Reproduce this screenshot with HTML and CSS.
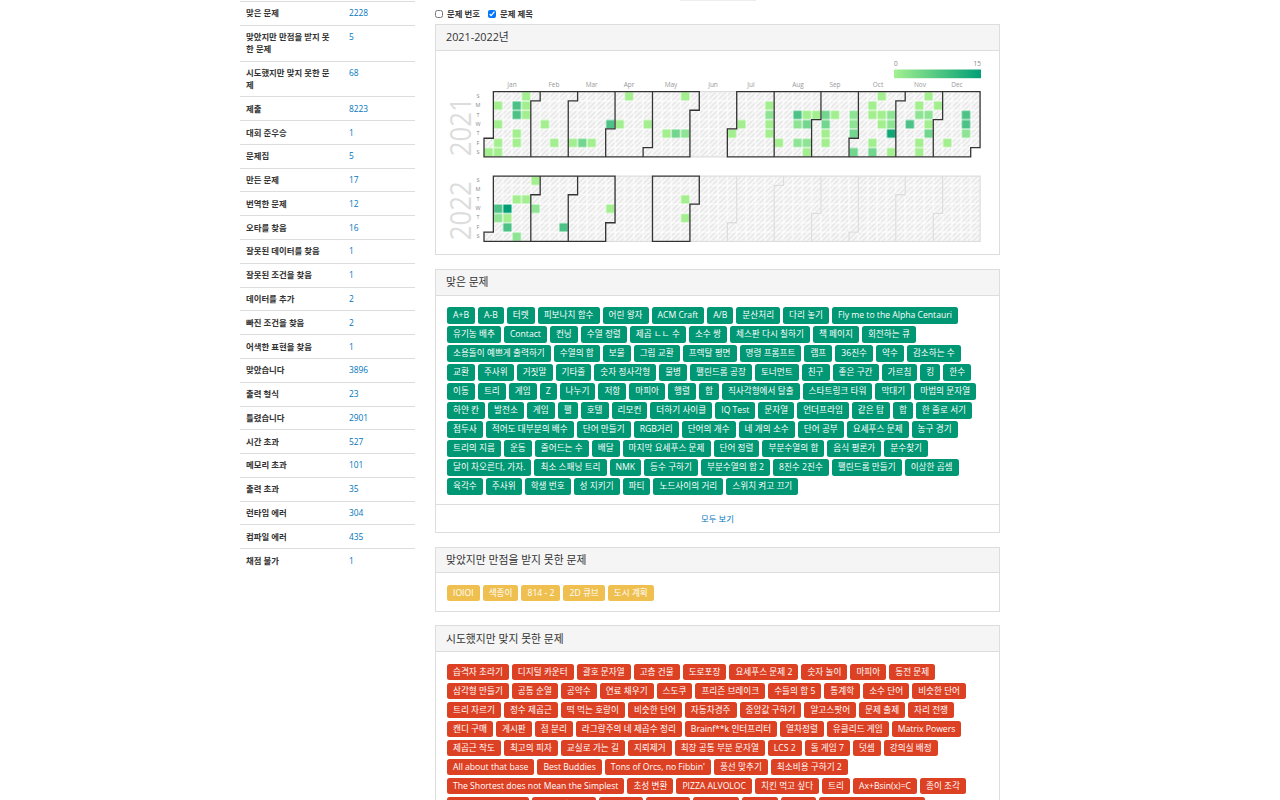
FILE: index.html
```html
<!DOCTYPE html>
<html lang="ko">
<head>
<meta charset="utf-8">
<title>백준 프로필</title>
<link rel="stylesheet" href="styles.css">
</head>
<body>
<div class="page">
<aside class="side">
<table class="stats">
<tr><th>맞은 문제</th><td><a>2228</a></td></tr>
<tr><th>맞았지만 만점을 받지 못한 문제</th><td><a>5</a></td></tr>
<tr><th>시도했지만 맞지 못한 문제</th><td><a>68</a></td></tr>
<tr><th>제출</th><td><a>8223</a></td></tr>
<tr><th>대회 준우승</th><td><a>1</a></td></tr>
<tr><th>문제집</th><td><a>5</a></td></tr>
<tr><th>만든 문제</th><td><a>17</a></td></tr>
<tr><th>번역한 문제</th><td><a>12</a></td></tr>
<tr><th>오타를 찾음</th><td><a>16</a></td></tr>
<tr><th>잘못된 데이터를 찾음</th><td><a>1</a></td></tr>
<tr><th>잘못된 조건을 찾음</th><td><a>1</a></td></tr>
<tr><th>데이터를 추가</th><td><a>2</a></td></tr>
<tr><th>빠진 조건을 찾음</th><td><a>2</a></td></tr>
<tr><th>어색한 표현을 찾음</th><td><a>1</a></td></tr>
<tr><th>맞았습니다</th><td><a>3896</a></td></tr>
<tr><th>출력 형식</th><td><a>23</a></td></tr>
<tr><th>틀렸습니다</th><td><a>2901</a></td></tr>
<tr><th>시간 초과</th><td><a>527</a></td></tr>
<tr><th>메모리 초과</th><td><a>101</a></td></tr>
<tr><th>출력 초과</th><td><a>35</a></td></tr>
<tr><th>런타임 에러</th><td><a>304</a></td></tr>
<tr><th>컴파일 에러</th><td><a>435</a></td></tr>
<tr><th>채점 불가</th><td><a>1</a></td></tr>
</table>
</aside>
<main class="main">
<div class="sliver"></div>
<div class="checks">
<label class="check"><input type="checkbox">문제 번호</label>
<label class="check"><input type="checkbox" checked>문제 제목</label>
</div>

<section class="panel">
<h3 class="panel-head">2021-2022년</h3>
<svg class="heat" viewBox="436 50.8 563 203.4" width="563" height="203.4">
<defs>
<pattern id="hatch" width="0.38" height="0.38" patternUnits="userSpaceOnUse" patternTransform="rotate(45)">
<rect class="hatch-bg" width="0.38" height="0.38"></rect>
<rect class="hatch-line" width="0.14" height="0.38"></rect>
</pattern>
<pattern id="grid" width="1" height="1" patternUnits="userSpaceOnUse">
<rect class="grid-cell" width="1" height="1"></rect>
</pattern>
<linearGradient id="legend">
<stop class="stop-a" offset="0"></stop>
<stop class="stop-b" offset="1"></stop>
</linearGradient>
</defs>
<rect class="legend-bar" x="894" y="69.3" width="87" height="8.7"></rect>
<text class="lbl" x="894" y="66">0</text>
<text class="lbl end" x="981" y="66">15</text>
<g class="months">
<text x="512" y="87">Jan</text><text x="554" y="87">Feb</text><text x="591.7" y="87">Mar</text><text x="629" y="87">Apr</text><text x="671" y="87">May</text><text x="713" y="87">Jun</text><text x="751" y="87">Jul</text><text x="798" y="87">Aug</text><text x="835" y="87">Sep</text><text x="878" y="87">Oct</text><text x="920" y="87">Nov</text><text x="957" y="87">Dec</text>
</g>
<text class="year" transform="translate(471,156) rotate(-90)" textLength="59" lengthAdjust="spacingAndGlyphs">2021</text>
<text class="year" transform="translate(471,240) rotate(-90)" textLength="59" lengthAdjust="spacingAndGlyphs">2022</text>
<g class="days">
<text x="478" y="98">S</text><text x="478" y="107.3">M</text><text x="478" y="116.7">T</text><text x="478" y="126">W</text><text x="478" y="135.3">T</text><text x="478" y="144.6">F</text><text x="478" y="154">S</text>
</g>
<g class="days">
<text x="478" y="182">S</text><text x="478" y="191.3">M</text><text x="478" y="200.7">T</text><text x="478" y="210">W</text><text x="478" y="219.3">T</text><text x="478" y="228.6">F</text><text x="478" y="238">S</text>
</g>
<g transform="translate(484,91.4) scale(9.36,9.33)">
<path class="bg" d="M0 5H1V0H53V6H52V7H0Z"></path>
<path class="c1" d="M4 0h1v1h-1zM15 0h1v1h-1zM21 0h1v1h-1zM42 0h1v1h-1zM47 0h1v1h-1zM1 1h1v1h-1zM4 1h1v1h-1zM30 1h1v1h-1zM41 1h1v1h-1zM46 1h1v1h-1zM48 1h1v1h-1zM4 2h1v1h-1zM34 2h1v1h-1zM35 2h1v1h-1zM37 2h1v1h-1zM41 2h1v1h-1zM42 2h1v1h-1zM1 3h1v1h-1zM6 3h1v1h-1zM14 3h1v1h-1zM17 3h1v1h-1zM27 3h1v1h-1zM30 3h1v1h-1zM42 3h1v1h-1zM47 3h1v1h-1zM3 4h1v1h-1zM19 4h1v1h-1zM26 4h1v1h-1zM30 4h1v1h-1zM36 4h1v1h-1zM1 5h1v1h-1zM3 5h1v1h-1zM7 5h1v1h-1zM9 5h1v1h-1zM11 5h1v1h-1zM31 5h1v1h-1zM36 5h1v1h-1zM41 5h1v1h-1zM46 5h1v1h-1zM49 5h1v1h-1zM0 6h1v1h-1zM1 6h1v1h-1zM34 6h1v1h-1zM43 6h1v1h-1zM46 6h1v1h-1z"></path>
<path class="c2" d="M30 2h1v1h-1zM39 2h1v1h-1zM43 2h1v1h-1zM46 2h1v1h-1zM47 2h1v1h-1zM33 3h1v1h-1zM39 3h1v1h-1zM43 3h1v1h-1zM21 4h1v1h-1zM51 4h1v1h-1zM33 5h1v1h-1zM34 5h1v1h-1z"></path>
<path class="c3" d="M36 2h1v1h-1zM34 3h1v1h-1zM36 3h1v1h-1zM20 4h1v1h-1zM39 4h1v1h-1zM47 4h1v1h-1zM10 5h1v1h-1zM39 6h1v1h-1zM41 6h1v1h-1z"></path>
<path class="c4" d="M3 1h1v1h-1zM3 2h1v1h-1zM33 2h1v1h-1zM51 2h1v1h-1zM13 3h1v1h-1zM45 3h1v1h-1zM51 3h1v1h-1z"></path>
<path class="c5" d="M43 4h1v1h-1z"></path>
<path class="gridlines" d="M0 5H1V0H53V6H52V7H0Z"></path>
<path class="off" d="M22 2H23V0H27V4H26V7H22Z"></path>
<path class="on" d="M0 5H1V0H6V1H5V7H0ZM5 1H6V0H10V1H9V7H5ZM9 1H10V0H14V4H13V7H9ZM13 4H14V0H18V6H17V7H13ZM17 6H18V0H23V2H22V7H17ZM26 4H27V0H31V7H26ZM31 0H36V3H35V7H31ZM35 3H36V0H40V5H39V7H35ZM39 5H40V0H45V1H44V7H39ZM44 1H45V0H49V3H48V7H44ZM48 3H49V0H53V6H52V7H48Z"></path>
</g>
<g transform="translate(484,175.9) scale(9.36,9.33)">
<path class="bg" d="M0 6H1V0H53V7H0Z"></path>
<path class="c1" d="M5 0h1v1h-1zM3 2h1v1h-1zM4 2h1v1h-1zM21 2h1v1h-1zM13 3h1v1h-1zM2 4h1v1h-1zM21 4h1v1h-1z"></path>
<path class="c2" d="M5 3h1v1h-1zM3 6h1v1h-1zM1 4h1v1h-1z"></path>
<path class="c4" d="M1 3h1v1h-1zM2 5h1v1h-1zM8 5h1v1h-1z"></path>
<path class="c6" d="M2 3h1v1h-1z"></path>
<path class="gridlines" d="M0 6H1V0H53V7H0Z"></path>
<path class="off" d="M13 5H14V0H18V7H13ZM22 3H23V0H27V5H26V7H22ZM26 5H27V0H32V1H31V7H26ZM31 1H32V0H36V4H35V7H31ZM35 4H36V0H40V6H39V7H35ZM39 6H40V0H45V2H44V7H39ZM44 2H45V0H49V4H48V7H44ZM48 4H49V0H53V7H48Z"></path>
<path class="on" d="M0 6H1V0H6V2H5V7H0ZM5 2H6V0H10V2H9V7H5ZM9 2H10V0H14V5H13V7H9ZM18 0H23V3H22V7H18Z"></path>
</g>
</svg>
</section>

<section class="panel">
<h3 class="panel-head">맞은 문제</h3>
<div class="panel-body green">
<div class="row"><a>A+B</a><a>A-B</a><a>터렛</a><a>피보나치 함수</a><a>어린 왕자</a><a>ACM Craft</a><a>A/B</a><a>분산처리</a><a>다리 놓기</a><a>Fly me to the Alpha Centauri</a></div>
<div class="row"><a>유기농 배추</a><a>Contact</a><a>컨닝</a><a>수열 정렬</a><a>제곱 ㄴㄴ 수</a><a>소수 쌍</a><a>체스판 다시 칠하기</a><a>책 페이지</a><a>회전하는 큐</a></div>
<div class="row"><a>소용돌이 예쁘게 출력하기</a><a>수열의 합</a><a>보물</a><a>그림 교환</a><a>프렉탈 평면</a><a>명령 프롬프트</a><a>램프</a><a>36진수</a><a>약수</a><a>감소하는 수</a></div>
<div class="row"><a>교환</a><a>주사위</a><a>거짓말</a><a>기타줄</a><a>숫자 정사각형</a><a>물병</a><a>팰린드롬 공장</a><a>토너먼트</a><a>친구</a><a>좋은 구간</a><a>가르침</a><a>킹</a><a>한수</a></div>
<div class="row"><a>이동</a><a>트리</a><a>게임</a><a>Z</a><a>나누기</a><a>저항</a><a>마피아</a><a>행렬</a><a>합</a><a>직사각형에서 탈출</a><a>스타트링크 타워</a><a>막대기</a><a>마법의 문자열</a></div>
<div class="row"><a>하얀 칸</a><a>발전소</a><a>게임</a><a>팰</a><a>호텔</a><a>리모컨</a><a>더하기 사이클</a><a>IQ Test</a><a>문자열</a><a>언더프라임</a><a>같은 탑</a><a>합</a><a>한 줄로 서기</a></div>
<div class="row"><a>접두사</a><a>적어도 대부분의 배수</a><a>단어 만들기</a><a>RGB거리</a><a>단어의 개수</a><a>네 개의 소수</a><a>단어 공부</a><a>요세푸스 문제</a><a>농구 경기</a></div>
<div class="row"><a>트리의 지름</a><a>운동</a><a>줄어드는 수</a><a>배달</a><a>마지막 요세푸스 문제</a><a>단어 정렬</a><a>부분수열의 합</a><a>음식 평론가</a><a>분수찾기</a></div>
<div class="row"><a>달이 차오른다, 가자.</a><a>최소 스패닝 트리</a><a>NMK</a><a>등수 구하기</a><a>부분수열의 합 2</a><a>8진수 2진수</a><a>팰린드롬 만들기</a><a>이상한 곱셈</a></div>
<div class="row"><a>육각수</a><a>주사위</a><a>학생 번호</a><a>성 지키기</a><a>파티</a><a>노드사이의 거리</a><a>스위치 켜고 끄기</a></div>
</div>
<div class="panel-foot"><a>모두 보기</a></div>
</section>

<section class="panel">
<h3 class="panel-head">맞았지만 만점을 받지 못한 문제</h3>
<div class="panel-body yellow">
<div class="row"><a>IOIOI</a><a>색종이</a><a>814 - 2</a><a>2D 큐브</a><a>도시 계획</a></div>
</div>
</section>

<section class="panel">
<h3 class="panel-head">시도했지만 맞지 못한 문제</h3>
<div class="panel-body red">
<div class="row"><a>습격자 초라기</a><a>디지털 카운터</a><a>괄호 문자열</a><a>고층 건물</a><a>도로포장</a><a>요세푸스 문제 2</a><a>숫자 놀이</a><a>마피아</a><a>동전 문제</a></div>
<div class="row"><a>삼각형 만들기</a><a>공통 순열</a><a>공약수</a><a>연료 채우기</a><a>스도쿠</a><a>프리즌 브레이크</a><a>수들의 합 5</a><a>통계학</a><a>소수 단어</a><a>비슷한 단어</a></div>
<div class="row"><a>트리 자르기</a><a>정수 제곱근</a><a>떡 먹는 호랑이</a><a>비슷한 단어</a><a>자동차경주</a><a>중앙값 구하기</a><a>알고스팟어</a><a>문제 출제</a><a>자리 전쟁</a></div>
<div class="row"><a>캔디 구매</a><a>게시판</a><a>점 분리</a><a>라그랑주의 네 제곱수 정리</a><a>Brainf**k 인터프리터</a><a>열차정렬</a><a>유클리드 게임</a><a>Matrix Powers</a></div>
<div class="row"><a>제곱근 작도</a><a>최고의 피자</a><a>교실로 가는 길</a><a>지뢰제거</a><a>최장 공통 부분 문자열</a><a>LCS 2</a><a>돌 게임 7</a><a>덧셈</a><a>강의실 배정</a></div>
<div class="row"><a>All about that base</a><a>Best Buddies</a><a>Tons of Orcs, no Fibbin'</a><a>풍선 맞추기</a><a>최소비용 구하기 2</a></div>
<div class="row"><a>The Shortest does not Mean the Simplest</a><a>초성 변환</a><a>PIZZA ALVOLOC</a><a>치킨 먹고 싶다</a><a>트리</a><a>Ax+Bsin(x)=C</a><a>종이 조각</a></div>
<div class="row cut"><a>수 이어 쓰기 구하기</a><a>그림 교환 게임</a><a>공항관리</a><a>미로탐색</a><a>체스 투어</a><a>숨바꼭</a><a>벽뚫기</a><a>가장 긴 증가하는 부분수열</a></div>
</div>
</section>
</main>
</div>
</body>
</html>
```
FILE: styles.css
```css
html, body {
  margin: 0;
  height: 800px;
  overflow: hidden;
  background: #fff;
}
body {
  font-family: "Open Sans", "Noto Sans CJK KR", sans-serif;
  font-size: 8.4px;
  line-height: 12px;
  color: #333;
}
.page {
  display: grid;
  grid-template-columns: 175px 565px;
  column-gap: 20px;
  width: 760px;
  margin-left: 240px;
}
.side {
  padding-top: 1px;
}
.stats {
  width: 175px;
  table-layout: fixed;
  border-collapse: collapse;
}
.stats th, .stats td {
  padding: 5.4px 6px;
  border-top: 1px solid #ddd;
  text-align: left;
  vertical-align: top;
  font-weight: 700;
}
.stats th {
  width: 91px;
}
.stats td {
  font-weight: 400;
}
.stats a, .panel-foot a {
  color: #0076c0;
}
.sliver {
  width: 76px;
  height: 1px;
  margin-left: 245px;
  background: #eee;
}
.checks {
  display: flex;
  align-items: center;
  gap: 8px;
  height: 23px;
  padding-top: 3px;
  box-sizing: border-box;
  font-weight: 700;
}
.check {
  display: flex;
  align-items: center;
  gap: 4px;
}
.check input {
  width: 8px;
  height: 8px;
  margin: 0;
}
.panel {
  border: 1px solid #ddd;
  margin-bottom: 13.7px;
}
.panel-head {
  margin: 0;
  height: 24.8px;
  padding: 0 10px;
  display: flex;
  align-items: center;
  background: #f5f5f5;
  border-bottom: 1px solid #ddd;
  font-size: 10.8px;
  font-weight: 400;
  line-height: 12px;
}
.heat {
  display: block;
}
.hatch-bg { fill: #f8f8f8; }
.hatch-line { fill: #e4e4e4; }
.grid-cell { fill: none; stroke: #fff; stroke-width: 0.1; }
.bg { fill: url(#hatch); }
.gridlines { fill: url(#grid); }
.c1 { fill: #a3ee8f; }
.c2 { fill: #8ee494; }
.c3 { fill: #72d68f; }
.c4 { fill: #4dc286; }
.c5 { fill: #10a675; }
.c6 { fill: #009f75; }
.on, .off {
  fill: none;
  stroke-width: 1.3;
  vector-effect: non-scaling-stroke;
}
.on { stroke: #333; }
.off { stroke: #ddd; }
.stop-a { stop-color: #a3f090; }
.stop-b { stop-color: #009f75; }
.legend-bar { fill: url(#legend); }
.lbl {
  font-size: 6.5px;
  fill: #888;
}
.end { text-anchor: end; }
.months text {
  font-size: 6.5px;
  fill: #999;
  text-anchor: middle;
}
.days text {
  font-size: 5.5px;
  fill: #888;
  text-anchor: middle;
}
.year {
  font-size: 30px;
  font-weight: 400;
  fill: #ddd;
}
.panel-body {
  padding: 11.4px 11px 9.4px;
}
.row {
  display: flex;
  gap: 3px;
  margin-bottom: 2.4px;
}
.row:last-child {
  margin-bottom: 0;
}
.row a {
  display: block;
  height: 16.6px;
  padding: 0 6px;
  border-radius: 2.5px;
  color: #fff;
  font-size: 8.64px;
  line-height: 16.6px;
  white-space: nowrap;
}
.green a { background: #009874; }
.yellow a { background: #efc050; }
.red a { background: #dd4124; }
.panel-foot {
  height: 28px;
  padding-top: 1px;
  display: flex;
  align-items: center;
  justify-content: center;
  border-top: 1px solid #ddd;
  box-sizing: border-box;
}
```
